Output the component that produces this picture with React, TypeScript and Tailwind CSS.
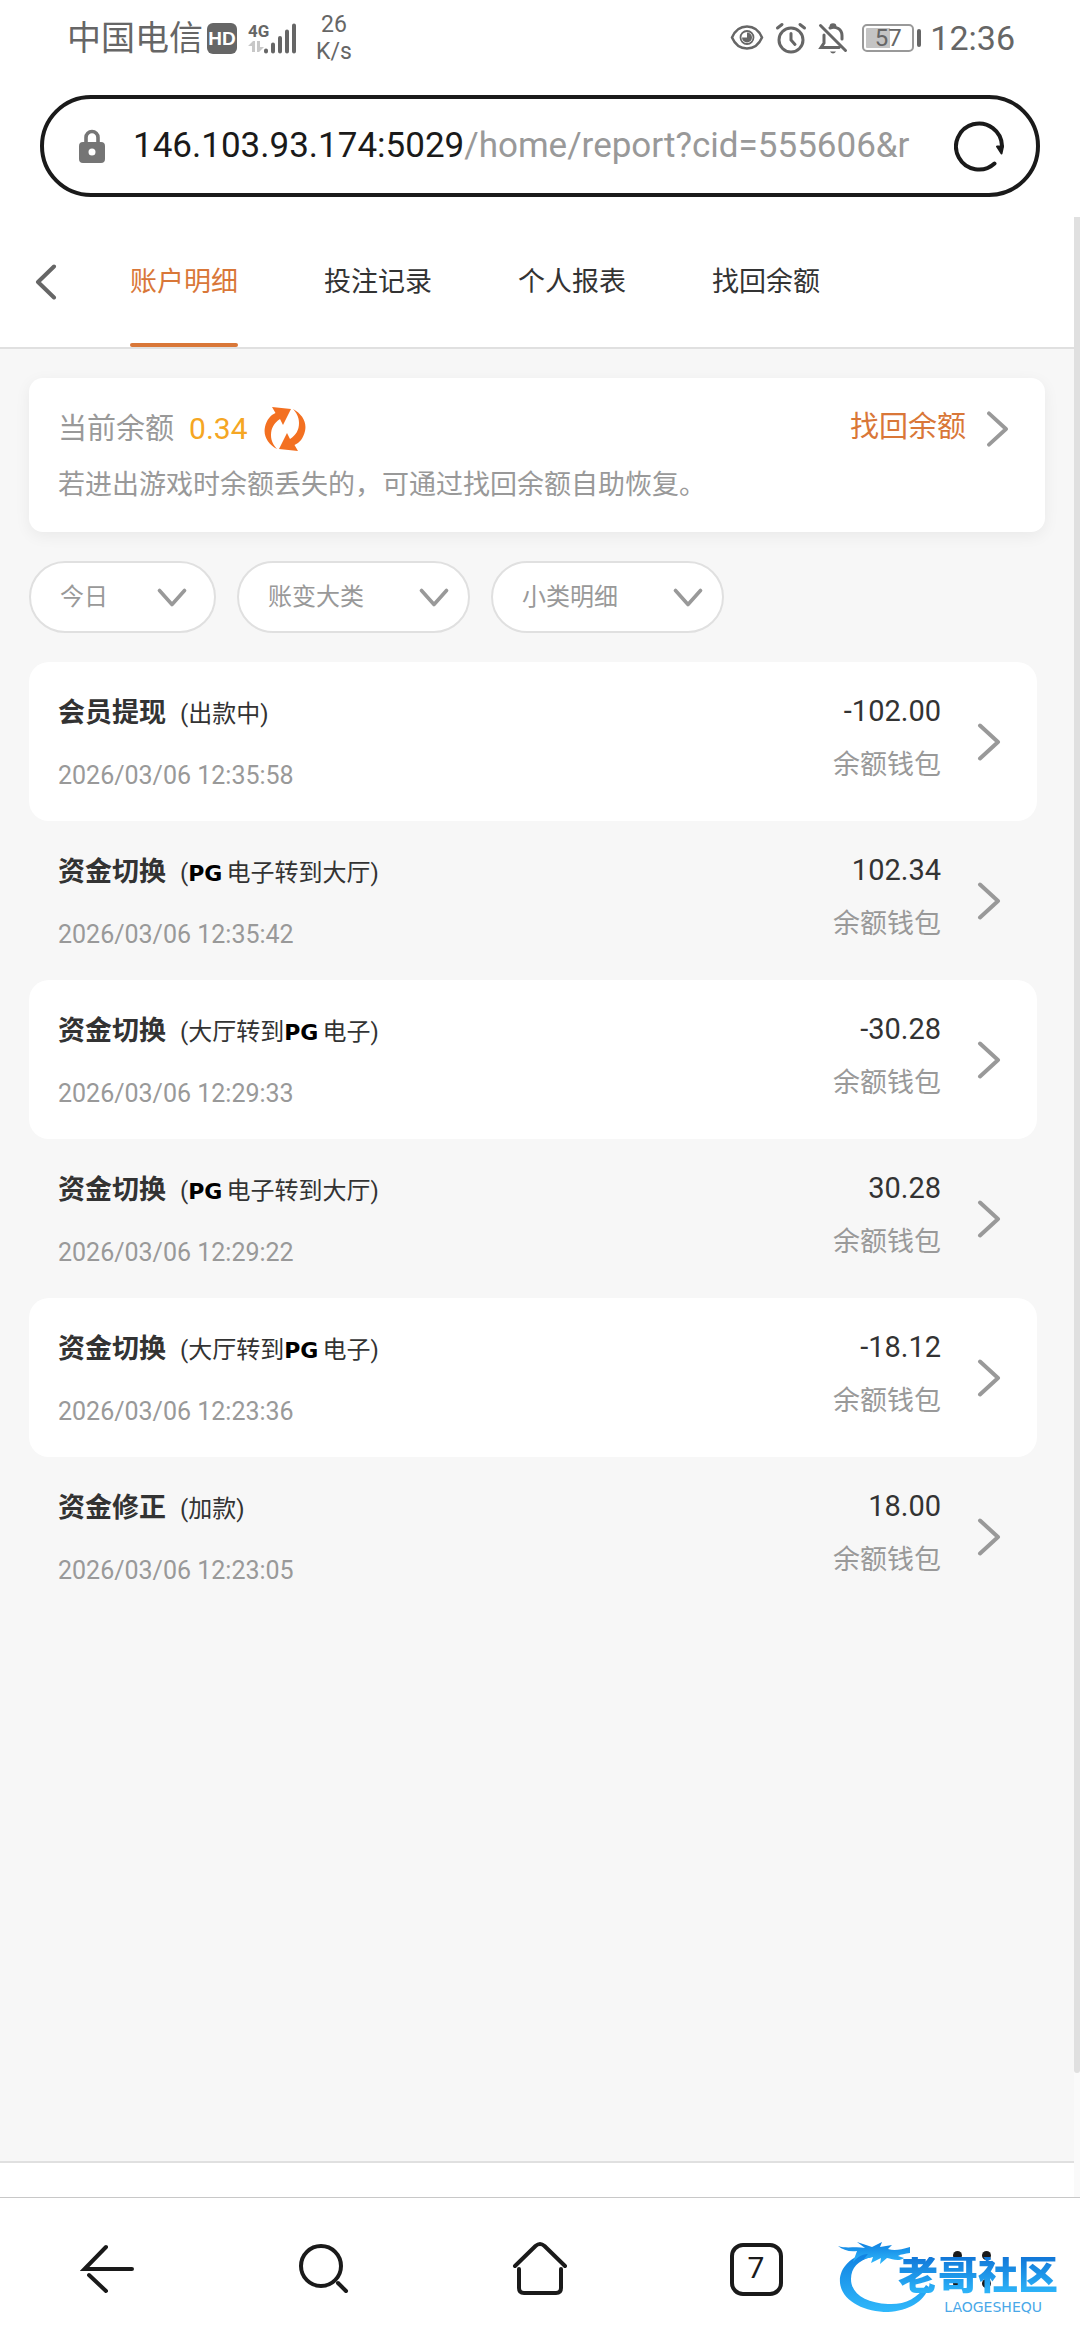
import React, { useState } from 'react';

const tabs = ['账户明细', '投注记录', '个人报表', '找回余额'];

const filters = [
  { id: 'day', label: '日期', value: '今日', width: 'w-[187px]', arrow: 'right-[29px]' },
  { id: 'category', label: '大类', value: '账变大类', width: 'w-[233px]', arrow: 'right-[21px]' },
  { id: 'detail', label: '小类', value: '小类明细', width: 'w-[233px]', arrow: 'right-[21px]' },
];

interface RecordItem {
  title: string;
  note: React.ReactNode;
  time: string;
  amount: string;
}

const Pg = () => <b className="mr-1 font-['DejaVu_Sans'] text-[22px] leading-none text-black">PG</b>;

const records: RecordItem[] = [
  { title: '会员提现', note: '(出款中)', time: '2026/03/06 12:35:58', amount: '-102.00' },
  { title: '资金切换', note: <>(<Pg />电子转到大厅)</>, time: '2026/03/06 12:35:42', amount: '102.34' },
  { title: '资金切换', note: <>(大厅转到<Pg />电子)</>, time: '2026/03/06 12:29:33', amount: '-30.28' },
  { title: '资金切换', note: <>(<Pg />电子转到大厅)</>, time: '2026/03/06 12:29:22', amount: '30.28' },
  { title: '资金切换', note: <>(大厅转到<Pg />电子)</>, time: '2026/03/06 12:23:36', amount: '-18.12' },
  { title: '资金修正', note: '(加款)', time: '2026/03/06 12:23:05', amount: '18.00' },
];

const ChevronRight = ({ className }: { className: string }) => (
  <svg viewBox="0 0 24 38" className={className} fill="none" stroke="#999" strokeWidth="4" strokeLinecap="round" strokeLinejoin="round">
    <path d="M3 2.500L21 19L3 35.500" />
  </svg>
);

const StatusBar = () => (
  <div className="flex h-[76px] items-center justify-between pl-[67px] pr-[65px] text-[#666]">
    <div className="flex items-center">
      <span className="text-[34px] leading-none">中国电信</span>
      <span className="ml-1 flex h-[31px] w-[30px] items-center justify-center rounded-md bg-[#666] font-['Liberation_Sans'] text-[19px] font-bold leading-none text-white">HD</span>
      <div className="ml-[11px] w-4">
        <span className="block text-[17px] font-bold leading-[18px]">4G</span>
        <svg viewBox="0 0 16 14" className="h-3.5 w-4" fill="#c8c8c8">
          <path d="M0 6L5 1H7V12H4V6ZM9 1H12V7H16L11 12H9Z" />
        </svg>
      </div>
      <svg viewBox="0 0 32 32" className="h-8 w-8" stroke="#666" strokeWidth="4" strokeLinecap="round">
        <path d="M2 28.500V29.500M9 22.500V29.500M16 16V29.500M23 9.500V29.500M30 3.500V29.500" />
      </svg>
      <span className="ml-5 text-center text-[23px] leading-[27px]">26<br />K/s</span>
    </div>
    <div className="flex items-center">
      <svg viewBox="0 0 34 32" className="h-8 w-[34px]" fill="none" stroke="#666" strokeWidth="2.500">
        <path d="M2 15.500C5 8.500 10.500 4.500 17 4.500S29 8.500 32 15.500C29 22.500 23.500 26.500 17 26.500S5 22.500 2 15.500Z" />
        <circle cx="17" cy="15.500" r="6.500" strokeWidth="1.800" />
        <path d="M17 10.500A5 5 0 1 1 12 15.500H17Z" fill="#666" stroke="none" />
      </svg>
      <svg viewBox="0 0 32 32" className="ml-[11px] h-8 w-8" fill="none" stroke="#666" strokeWidth="3" strokeLinecap="round">
        <circle cx="16" cy="18" r="12" />
        <path d="M16 11.500V18L20 22.500M2.500 6L7 2.500M29.500 6L25 2.500" />
      </svg>
      <svg viewBox="0 0 30 32" className="ml-[11px] h-8 w-[30px]" fill="none" stroke="#666" strokeWidth="3" strokeLinecap="round">
        <path d="M2.500 3.500L27.500 28.500M6 13V21L3 25.500H21M12 6C18 3.500 24 7.500 24 13.500V17M13 4.500C13 2 17 2 17 4.500" />
        <path d="M12 29.500C13.500 32 16.500 32 18 29.500Z" fill="#666" stroke="none" />
      </svg>
      <div className="ml-3.5 flex items-center gap-[3px]">
        <span className="flex h-7 w-[52px] items-center justify-center rounded-[5px] border-2 border-[#999] bg-[linear-gradient(90deg,#c4c4c4_55%,#fff_55%)] bg-clip-content p-[2px] text-[24px] leading-none">57</span>
        <span className="h-[18px] w-1 rounded-sm bg-[#666]" />
      </div>
      <span className="ml-[9px] text-[34px] leading-none">12:36</span>
    </div>
  </div>
);

const AddressBar = () => (
  <div className="px-10 pb-5 pt-[19px]">
    <div className="flex h-[102px] items-center rounded-full border-4 border-[#1a1a1a] pl-[35px] pr-8">
      <svg viewBox="0 0 26 36" className="h-9 w-[26px] shrink-0">
        <path d="M7 16V9.500A6 6 0 0 1 19 9.500V16" fill="none" stroke="#757575" strokeWidth="3.600" />
        <path fillRule="evenodd" d="M4 14H22Q26 14 26 18V31Q26 35 22 35H4Q0 35 0 31V18Q0 14 4 14ZM13 20.500A3.500 3.500 0 1 0 13 27.500A3.500 3.500 0 1 0 13 20.500Z" fill="#757575" />
      </svg>
      <button className="ml-7 flex-1 overflow-hidden whitespace-nowrap text-left text-[35px] leading-[50px] text-[#999]">
        <span className="text-[#1a1a1a]">146.103.93.174:5029</span>/home/report?cid=555606&amp;r
      </button>
      <button aria-label="刷新" className="ml-9 shrink-0">
        <svg viewBox="0 0 50 52" className="h-[52px] w-[50px]" fill="none" stroke="#1a1a1a" strokeWidth="4" strokeLinecap="round">
          <path d="M40.500 43.500A23 23 0 1 1 48 26" />
          <path d="M43 26.500H49L47.500 33.500Z" fill="#1a1a1a" strokeWidth="2" strokeLinejoin="round" />
        </svg>
      </button>
    </div>
  </div>
);

const BalanceCard = () => (
  <section className="rounded-[14px] bg-white pb-[27px] pl-[29px] pr-9 pt-[29px] shadow-[0_4px_16px_rgba(0,0,0,0.06)]">
    <div className="flex h-11 items-center text-[29px] leading-10">
      <span className="text-[#999]">当前余额</span>
      <span className="ml-[15px] text-[30px] text-[#f5a623]">0.34</span>
      <button aria-label="刷新余额" className="ml-4">
        <svg viewBox="0 0 42 44" className="h-11 w-[42px]" fill="#f37021">
          <path d="M13 42C4 37 -1 29 1 20C2.500 13 6.500 8 11.500 6L8 0L27 2L19 18L16 12C10 16 7 21 7 28C7 34 9.500 38 13 42Z" />
          <path d="M29 2C38 7 43 15 41 24C39.500 31 35.500 36 30.500 38L34 44L15 42L23 26L26 32C32 28 35 23 35 16C35 10 32.500 6 29 2Z" />
        </svg>
      </button>
      <a href="#recover" className="ml-auto flex items-center text-[#d97738]">
        <span className="pb-1">找回余额</span>
        <ChevronRight className="ml-5 h-9 w-[23px]" />
      </a>
    </div>
    <p className="mt-3.5 text-[27px] leading-10 text-[#999]">若进出游戏时余额丢失的，可通过找回余额自助恢复。</p>
  </section>
);

const FilterSelect = ({ filter }: { filter: (typeof filters)[number] }) => (
  <div className="relative">
    <select id={filter.id} aria-label={filter.label} className={`${filter.width} h-[72px] appearance-none rounded-full border-2 border-[#e0e0e0] bg-white pl-[29px] text-[24px] text-[#999] outline-none`}>
      <option>{filter.value}</option>
    </select>
    <svg viewBox="0 0 30 20" className={`${filter.arrow} pointer-events-none absolute top-[27px] h-5 w-[30px]`} fill="none" stroke="#999" strokeWidth="3.600" strokeLinecap="round" strokeLinejoin="round">
      <path d="M2.500 2.500L15 16.500L27.500 2.500" />
    </svg>
  </div>
);

const RecordRow = ({ item }: { item: RecordItem }) => (
  <li className="rounded-[20px] odd:bg-white">
    <button className="flex h-[159px] w-full items-center pl-[29px] pr-9 text-left">
      <span className="flex-1 pt-1.5">
        <span className="flex h-10 items-center text-[#333]">
          <b className="text-[27px]">{item.title}</b>
          <span className="ml-3.5 text-[24px]">{item.note}</span>
        </span>
        <span className="mt-[22px] block text-[25px] leading-10 text-[#999]">{item.time}</span>
      </span>
      <span className="pb-2 text-right">
        <span className="block text-[29px] leading-10 text-[#333]">{item.amount}</span>
        <span className="mt-3.5 block text-[27px] leading-10 text-[#999]">余额钱包</span>
      </span>
      <ChevronRight className="ml-9 h-[38px] w-6" />
    </button>
  </li>
);

const Watermark = () => (
  <div className="pointer-events-none absolute right-[18px] top-[38px] h-[78px] w-[224px]">
    <svg viewBox="0 0 224 78" className="absolute inset-0 h-full w-full">
      <defs>
        <linearGradient id="dragon" x1="0" y1="0" x2="0" y2="1">
          <stop offset="0" stopColor="#0f7fe0" />
          <stop offset="1" stopColor="#2fb8fb" />
        </linearGradient>
      </defs>
      <g fill="url(#dragon)">
        <path d="M32 15C12 21 1 32 2 47C4 65 26 76 50 76C70 75 86 66 91 51L88 49C80 62 67 69 50 68C28 67 13 58 13 43C13 32 20 24 34 21Z" />
        <path d="M0 10C9 13 17 10 27 12L19 6L34 11L44 6L42 11L54 9L50 13C56 15 62 14 72 11V17C67 18 63 18 60 20L66 22C61 26 54 23 49 22L42 28L43 22L33 27L35 21L26 23L30 18C23 18 19 22 15 26L19 15C11 16 5 14 0 10Z" />
      </g>
    </svg>
    <span className="absolute right-1 top-[21px] bg-linear-to-b from-[#1277d8] to-[#2fb8fb] bg-clip-text text-[40px] font-black leading-[38px] text-transparent">老哥社区</span>
    <span className="absolute right-5 top-[64px] font-['DejaVu_Sans'] text-[14px] leading-[14px] text-[#4aa8e8]">LAOGESHEQU</span>
  </div>
);

const BrowserToolbar = () => (
  <footer className="relative border-t border-[#c8c8c8] bg-white">
    <div className="grid h-[142px] grid-cols-5 place-items-center">
      <button aria-label="后退">
        <svg viewBox="0 0 56 56" className="size-14" fill="none" stroke="#1a1a1a" strokeWidth="4" strokeLinecap="round">
          <path d="M26 6L4.500 28H52M9 34L26 50" />
        </svg>
      </button>
      <button aria-label="搜索">
        <svg viewBox="0 0 56 56" className="size-14" fill="none" stroke="#1a1a1a" strokeWidth="4" strokeLinecap="round">
          <circle cx="25" cy="25" r="20" />
          <path d="M42 42L50 50" />
        </svg>
      </button>
      <button aria-label="主页">
        <svg viewBox="0 0 56 56" className="size-14" fill="none" stroke="#1a1a1a" strokeWidth="4" strokeLinecap="round" strokeLinejoin="round">
          <path d="M3 25L23.500 5Q28 1 32.500 5L53 25M7 28V47Q7 52 12 52H44Q49 52 49 47V28" />
        </svg>
      </button>
      <button aria-label="标签页" className="flex size-[53px] items-center justify-center rounded-[13px] border-4 border-[#1a1a1a] pb-0.5 text-[30px] leading-none text-[#1a1a1a]">7</button>
      <button aria-label="菜单" className="grid grid-cols-2 gap-x-5 gap-y-[19px]">
        <i className="size-[9px] rounded-full bg-[#1a1a1a]" />
        <i className="size-[9px] rounded-full bg-[#1a1a1a]" />
        <i className="size-[9px] rounded-full bg-[#1a1a1a]" />
        <i className="size-[9px] rounded-full bg-[#1a1a1a]" />
      </button>
    </div>
    <Watermark />
  </footer>
);

export default function App() {
  const [active, setActive] = useState(0);

  return (
    <div className="flex min-h-screen flex-col bg-white font-[Roboto,'Noto_Sans_CJK_SC',sans-serif]">
      <header>
        <StatusBar />
        <AddressBar />
      </header>

      <div className="relative flex flex-1 flex-col">
        <nav className="flex h-[132px] items-stretch border-b-2 border-[#e0e0e0] pl-[34px]">
          <button aria-label="返回" className="mr-[73px]">
            <svg viewBox="0 0 23 36" className="h-9 w-[23px]" fill="none" stroke="#666" strokeWidth="4" strokeLinecap="round" strokeLinejoin="round">
              <path d="M20 2.500L4 18L20 33.500" />
            </svg>
          </button>
          <div className="flex gap-[86px]">
            {tabs.map((tab, i) => (
              <button key={tab} onClick={() => setActive(i)} className={`relative text-[27px] ${i === active ? 'text-[#d97738]' : 'text-[#333]'}`}>
                {tab}
                {i === active && <span className="absolute inset-x-0 bottom-0 h-1 rounded-full bg-[#d97738]" />}
              </button>
            ))}
          </div>
        </nav>

        <main className="flex flex-1 flex-col gap-[29px] bg-[#f7f7f7] pl-[29px] pr-[35px] pt-[29px]">
          <BalanceCard />
          <div className="flex gap-[21px]">
            {filters.map(filter => <FilterSelect key={filter.id} filter={filter} />)}
          </div>
          <ul className="mr-2">
            {records.map(item => <RecordRow key={item.time} item={item} />)}
          </ul>
        </main>
        <div className="h-9 border-t-2 border-[#e0e0e0] bg-white" />

        <div className="absolute inset-y-0 right-0 w-1.5 bg-[#fafafa]">
          <div className="h-15/16 rounded-b-full bg-[#e0e0e0]" />
        </div>
      </div>

      <BrowserToolbar />
    </div>
  );
}
